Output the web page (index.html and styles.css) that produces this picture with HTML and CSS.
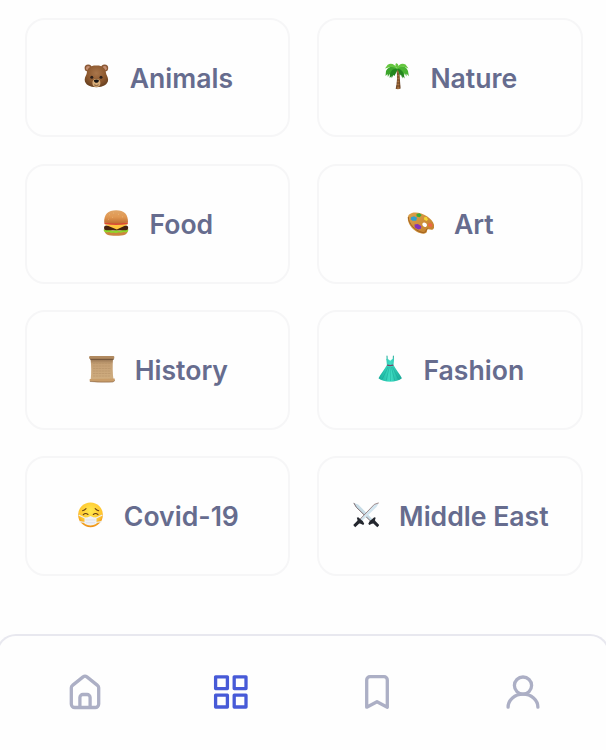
FILE: index.html
```html
<!DOCTYPE html>
<html lang="en">
<head>
<meta charset="utf-8">
<title>Categories</title>
<link rel="stylesheet" href="styles.css">
</head>
<body>
<main class="topics">
  <button class="topic">
    <svg class="emoji" viewBox="0 0 27 28">
      <defs>
        <radialGradient id="fur" cx=".5" cy=".35" r=".65"><stop offset="0" stop-color="#a9764b"/><stop offset=".65" stop-color="#8b572d"/><stop offset="1" stop-color="#68401f"/></radialGradient>
      </defs>
      <circle cx="5.200" cy="6" r="3.600" fill="#8a5835"/><circle cx="21.600" cy="6" r="3.600" fill="#8a5835"/>
      <circle cx="5.200" cy="6.200" r="2.200" fill="#c58f73"/><circle cx="21.600" cy="6.200" r="2.200" fill="#c58f73"/>
      <path d="M13.400 3.600C19 3.400 22.600 6 23 11c.2 2 2.100 3.700 2.100 6.800 0 4.600-5 7.500-11.700 7.500S1.700 22.400 1.700 17.800C1.700 14.700 3.600 13 3.800 11c.4-5 4-7.600 9.600-7.400z" fill="url(#fur)"/>
      <ellipse cx="13.400" cy="21" rx="4" ry="3.900" fill="#d7ad79"/>
      <path d="M10.900 18.200q2.500-1.300 5 0c.3 1.400-1.400 2.600-2.500 2.600s-2.800-1.200-2.500-2.600z" fill="#171414"/>
      <path d="M11.200 22.800q2.200 1.600 4.400 0" fill="none" stroke="#65432b" stroke-width=".8"/>
      <circle cx="8.800" cy="15.200" r="1.500" fill="#2b201b"/><circle cx="18" cy="15.200" r="1.500" fill="#2b201b"/>
    </svg>
    <span>Animals</span>
  </button>
  <button class="topic">
    <svg class="emoji" viewBox="0 0 27 28">
      <defs><linearGradient id="trunk"><stop offset="0" stop-color="#553016"/><stop offset=".5" stop-color="#b37b46"/><stop offset="1" stop-color="#5c3518"/></linearGradient></defs>
      <path d="M13.500 7.500l2.600.5c.8 6 .9 12.500 1.500 18.600q-2.500 1-4.900.2c1.500-6 1.700-13 .8-19.300z" fill="url(#trunk)"/>
      <path d="M14 12h2M14.200 15h2M14 18h2.600M13.800 21h3M13.300 24h3.800" stroke="#563218" stroke-width=".7"/>
      <path d="M14 6.500C10.500 3 5.500 4 3 9l-.5 5 2-2 .4 3 1.600-3 .8 2 1.400-3.200 1 2.600 1.300-3.500 1.200 1.500L14 7.800z" fill="#3ca52c"/>
      <path d="M14 6.500C18 2.500 23.500 4.500 25 9l.9 5.200-2.200-2.400-.4 2.700-1.500-3.200-.9 2.400-1.500-3-1 2.200-1.300-3.400L14 8z" fill="#48b331"/>
      <path d="M14.500 6.700C9 6.200 6.800 9.500 6.700 16l1.700-1.800.4 2 1.400-3.300 1.200 1.100L14.500 8zM14.500 6.700c4.300.4 6.700 3.800 7.100 9.800L19.800 14.500l-.4 1.900-1.500-4-1 1.300z" fill="#24871e"/>
      <path d="M14 6.800C12 2 8 .8 4.700 2.700L2 6.500l3.500-1C9 4.300 11.800 5.500 14 6.800zM14 6.800c1.400-4.500 5-6 8.500-4.300l3 4-3.800-1.400C18.500 4 16 5.500 14 6.800zM14 7c-1.400-2-2.200-4.200-1-5.700 3 .6 3 3.500 1 5.700z" fill="#65c63f"/>
    </svg>
    <span>Nature</span>
  </button>
  <button class="topic">
    <svg class="emoji" viewBox="0 0 27 28">
      <defs><linearGradient id="bun" x2="0" y2="1"><stop stop-color="#e0a567"/><stop offset=".5" stop-color="#e19852"/><stop offset="1" stop-color="#bd6d30"/></linearGradient></defs>
      <path d="M2.400 21.500h23.500c-.5 4.200-3.700 5.200-11.800 5.200S2.900 25.700 2.400 21.500z" fill="#cc843f"/>
      <path d="M1.800 20.300q3 1.200 5.800.4l3.200 1.200 3.300-.8 3.600 1 3.400-1.300q2.600.8 5.100-.8v2q-2 2.400-4.600.8-2.500 1.700-4.800.5-2.600 1.400-5 .1-2.700 1.100-4.800-.3-3.300 1.200-5.200-1z" fill="#8ed72b"/>
      <rect x="2" y="16.500" width="24.200" height="4.800" rx="2.200" fill="#46220f"/>
      <path d="M2.200 15.300l24-.2-5 2.500-6.400 3-6-2.600z" fill="#ffc43c"/>
      <path d="M2.400 13.300h23.400v1.800q-11.700 2-23.400 0z" fill="#dc4935"/>
      <path d="M2.200 13.500C1.900 5.500 6 1.300 14.100 1.300S26.300 5.500 26 13.500q-11.900 2.200-23.800 0z" fill="url(#bun)"/>
      <path d="M7 6l1-.5m3-1.500l1 .1m4 1.400l1-.3m3 2.500l1 .4m-11 .3l1-.2m-5 2.300l.8-.3" stroke="#efbd7c" stroke-width=".6"/>
    </svg>
    <span>Food</span>
  </button>
  <button class="topic">
    <svg class="emoji" viewBox="0 0 27 28">
      <defs><linearGradient id="wood" x2="1" y2="1"><stop stop-color="#dda24c"/><stop offset="1" stop-color="#c07c28"/></linearGradient></defs>
      <path d="M2.100 5.500C6 2 14 3.200 20 7.300c5.500 3.700 8.700 8.900 6.500 12.500-1.100 1.900-3.500.5-5 .5-2.400 0-.6 2.700-2.600 3.800C15 26.200 7 22.300 3.300 16.700.6 12.600-.1 8 2.100 5.500zM17 13.500c-2 .2-2.200 2.700-.7 3.800 1.700 1.300 4 .3 3.600-1.600-.2-1.300-1.600-2.300-2.900-2.200z" fill="url(#wood)" fill-rule="evenodd"/>
      <path d="M1.300 8c0 6.500 6.700 13.700 13.800 15.400 4.200 1 3.500-3 5.400-3.800" fill="none" stroke="#94571b" stroke-width=".8"/>
      <path d="M4 8.300l3-1 3 1.500-.8 3-3.700-.1-1.800-1.200z" fill="#309fcf"/>
      <path d="M9.500 5.100l3-.8 2.200 1.800-2 2.200-3-.8z" fill="#38aa3a"/>
      <path d="M17.200 8.300l2.400-.2 1.400 2.400-1.400 1.500-2.600-1.600z" fill="#f5d832"/>
      <path d="M21.200 14.500l3-.2 1.400 2.300-1.500 1.400-2.700-.8z" fill="#ed6545"/>
      <path d="M7.500 15.500l3.300-.5 3.500 2.200-.4 2.600-2.800.8-3.300-2.100z" fill="#8232ba"/>
    </svg>
    <span>Art</span>
  </button>
  <button class="topic">
    <svg class="emoji" viewBox="0 0 27 28">
      <defs><linearGradient id="paper" x2="0" y2="1"><stop stop-color="#8f6d4c"/><stop offset=".25" stop-color="#c5a075"/><stop offset="1" stop-color="#d0ae80"/></linearGradient></defs>
      <path d="M2.500 3.500h22.500c-.5 7.500-.4 14.500.5 21.300H2.700c.7-7 .7-14-.2-21.300z" fill="url(#paper)"/>
      <path d="M5 8.500h17.500M5 11h17M5 13.500h17.500M5 16h17M5 18.500h17.400M5 21h17" stroke="#b38f64" stroke-width=".5" stroke-dasharray="2.500 .5"/>
      <rect x="1.100" y="1" width="25.200" height="3" rx="1" fill="#b18a60"/><path d="M2 4.300h24" stroke="#5c432e" stroke-width=".7"/>
      <path d="M1.700 24l25-.4.200 2.200-2 1.300q-12 .7-23.200-.7z" fill="#c99d69"/><path d="M2 26.500q11 .9 23 .5l1.800-1.500" fill="none" stroke="#76543a" stroke-width=".5"/>
    </svg>
    <span>History</span>
  </button>
  <button class="topic">
    <svg class="emoji" viewBox="-.7 0 27 28">
      <defs><linearGradient id="dress"><stop stop-color="#15ad9b"/><stop offset=".5" stop-color="#40dfc5"/><stop offset="1" stop-color="#15a594"/></linearGradient></defs>
      <path d="M10.300.7l.2 4.500M16.700.7l-.2 4.500" fill="none" stroke="#16ad99" stroke-width="1"/>
      <path d="M9.600 3.800q2 .2 3.900 2 1.900-1.800 3.900-2l-.6 6.200c2.200 4.500 6.400 8.800 8.400 13.200-4.700 4.600-18.700 4.600-23.400 0 2-4.400 6.200-8.700 8.400-13.200z" fill="url(#dress)"/>
      <path d="M10.400 10.200q3 .8 6.200 0" stroke="#7c4668" stroke-width="1.200" fill="none"/>
      <path d="M11.400 12L5.500 24M12.500 12l-3 13.500M13.500 12l.3 14M14.700 12l3.300 13.500M15.800 12l6 12.200" stroke="#0e9889" stroke-width=".6" opacity=".65"/>
    </svg>
    <span>Fashion</span>
  </button>
  <button class="topic">
    <svg class="emoji" viewBox="0 0 27 28">
      <defs><radialGradient id="face" cx=".5" cy=".35" r=".65"><stop stop-color="#ffe94f"/><stop offset=".7" stop-color="#ffc52e"/><stop offset="1" stop-color="#ec8c17"/></radialGradient></defs>
      <circle cx="13.500" cy="13.800" r="12.400" fill="url(#face)"/>
      <path d="M5.500 9.700q2-.3 3.500-2M18.200 7.700Q19.700 9.400 21.700 9.700M6.300 13.700q2.200-2.200 4.700-.2M16.300 13.500q2.500-2 4.700.2" fill="none" stroke="#684018" stroke-width="1.100" stroke-linecap="round"/>
      <path d="M1.600 14l6.200 3m-5.500 3.700l6 .8M25.400 14l-6.200 3m5.500 3.700l-6 .8" stroke="#eceff3" stroke-width="1.200"/>
      <path d="M7.500 16.500q3.300 0 6-1.500 2.700 1.500 6 1.500v6.300q-6 3.600-12 0z" fill="#f0f1f5"/>
      <path d="M8.500 19h10m-9.600 2.700h9.200" stroke="#d5d9df" stroke-width=".6"/>
    </svg>
    <span>Covid-19</span>
  </button>
  <button class="topic">
    <svg class="emoji" viewBox="-.5 0 27 28">
      <path d="M1.300 1.900l4.400 1.500 15 15.600-1.900 1.800L3.500 6z" fill="#c8dce6"/>
      <path d="M1.300 1.900l2.400 4.200 15.100 14.700" fill="none" stroke="#705d62" stroke-width=".9"/>
      <path d="M15.800 22.800l1.300-2.500 4.700-4.100 1.400.5-.8 2.500.7 1 3.700 3.900-2 2.100-4-3.700-1.500.2-2.500 1.300z" fill="#24272e"/>
      <g transform="matrix(-1 0 0 1 27.500 0)">
        <path d="M1.300 1.900l4.400 1.500 15 15.600-1.900 1.800L3.500 6z" fill="#d3e5ef"/>
        <path d="M1.300 1.900l4.400 1.500 15 15.600" fill="none" stroke="#886f70" stroke-width=".8"/>
        <path d="M15.800 22.800l1.300-2.500 4.700-4.100 1.400.5-.8 2.500.7 1 3.700 3.900-2 2.100-4-3.700-1.500.2-2.500 1.300z" fill="#24272e"/>
      </g>
    </svg>
    <span>Middle East</span>
  </button>
</main>
<nav class="tabs">
  <a class="tab"><svg viewBox="0 0 40 40"><path d="M6.300 15.800v16.200a3.500 3.500 0 0 0 3.500 3.500h20.400a3.500 3.500 0 0 0 3.500-3.500V15.800a3 3 0 0 0-1.200-2.400L21.900 4.900a3 3 0 0 0-3.800 0L7.500 13.400a3 3 0 0 0-1.200 2.400z"/><path d="M14.900 35.300V25.500a3 3 0 0 1 3-3h4.200a3 3 0 0 1 3 3v9.800"/></svg></a>
  <a class="tab tab-active"><svg viewBox="0 0 40 40"><rect x="4.600" y="4.800" width="11.800" height="11.800"/><rect x="23.200" y="4.800" width="11.800" height="11.800"/><rect x="4.600" y="23.200" width="11.800" height="11.800"/><rect x="23.200" y="23.200" width="11.800" height="11.800"/></svg></a>
  <a class="tab"><svg viewBox="0 0 40 40"><path d="M9.700 8v27.200l10.300-5.500 10.300 5.500V8a3.300 3.300 0 0 0-3.300-3.300H13A3.300 3.300 0 0 0 9.700 8z"/></svg></a>
  <a class="tab"><svg viewBox="0 0 40 40"><circle cx="20" cy="13.600" r="8.600"/><path d="M5.100 35.200a14.900 13 0 0 1 29.800 0"/></svg></a>
</nav>
</body>
</html>
```
FILE: styles.css
```css
* { box-sizing: border-box; }

body {
  margin: 0;
  height: 750px;
  overflow: hidden;
  display: flex;
  flex-direction: column;
  background: #fefefe;
  font-family: Inter, sans-serif;
}

.topics {
  display: grid;
  grid-template-columns: 265.600px 265.600px;
  grid-auto-rows: 119.700px;
  gap: 26.600px 26.900px;
  padding: 17.600px 0 0 24.800px;
  height: 633.500px;
  flex: none;
}

.topic {
  display: flex;
  align-items: center;
  justify-content: center;
  gap: 20px;
  padding: .2px 0 0 .5px;
  border: 2px solid #f6f6f7;
  border-radius: 20px;
  background: #fefefe;
  color: #666c8e;
  font: 600 26.600px/40px Inter, sans-serif;
  white-space: nowrap;
}

.emoji {
  flex: none;
  width: 27px;
  height: 28px;
  margin-bottom: 2.500px;
}

.tabs {
  flex: 1;
  display: grid;
  grid-template-columns: repeat(4, 146.200px);
  justify-content: center;
  margin: 0 -4px;
  padding: 36.500px 0 0 2px;
  border: 2px solid #e8e8ef;
  border-bottom: 0;
  border-radius: 20px 20px 0 0;
  background: #fefefe;
}

.tab {
  display: flex;
  justify-content: center;
  color: #acafc5;
}

.tab-active { color: #475ad7; }

.tab svg {
  width: 40px;
  height: 40px;
  fill: none;
  stroke: currentColor;
  stroke-width: 3.300px;
  stroke-linecap: round;
  stroke-linejoin: round;
}
```
